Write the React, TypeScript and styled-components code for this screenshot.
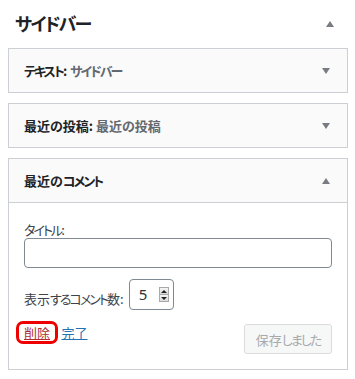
import React from "react";
import styled, { createGlobalStyle } from "styled-components";

const Global = createGlobalStyle`
  html, body { margin: 0; padding: 0; background: #ffffff; }
  body {
    font-family: "Noto Sans CJK JP", "Noto Sans", sans-serif;
    font-size: 13px;
    color: #1d2327;
    font-feature-settings: "palt";
  }
`;

const Kana = styled.span`
  letter-spacing: -0.15em;
`;

const Page = styled.div`
  width: 340px;
  margin-left: 8px;
  display: flex;
  flex-direction: column;
`;

const SidebarHead = styled.div`
  height: 48px;
  display: flex;
  align-items: center;
  justify-content: space-between;
  padding: 0 14px 0 7px;
  box-sizing: border-box;
`;

const SidebarTitle = styled.h2`
  margin: 0;
  font-size: 18px;
  font-weight: 700;
  line-height: 1;
  color: #1d2327;
  position: relative;
  top: -1px;
  letter-spacing: -0.1em;
`;

const Caret = styled.span<{ $up?: boolean }>`
  width: 0;
  height: 0;
  border-left: 4px solid transparent;
  border-right: 4px solid transparent;
  ${(p) =>
    p.$up
      ? "border-bottom: 6px solid #787c82;"
      : "border-top: 6px solid #787c82;"}
`;

const Widget = styled.div`
  border: 1px solid #ccd0d4;
  background: #ffffff;
  margin-bottom: 10px;
`;

const WidgetTop = styled.div<{ $open?: boolean }>`
  height: 43px;
  background: #fafafa;
  display: flex;
  align-items: center;
  justify-content: space-between;
  padding: 0 17px 0 15px;
  ${(p) => (p.$open ? "border-bottom: 1px solid #ccd0d4;" : "")}
`;

const WidgetTitle = styled.h3`
  margin: 0;
  font-size: 13px;
  font-weight: 700;
  line-height: 18px;
  color: #1d2327;
`;

const InTitle = styled.span`
  color: #646970;
`;

const WidgetBody = styled.div`
  padding: 19px 15px 15px;
  display: flex;
  flex-direction: column;
`;

const Label = styled.label`
  font-size: 13px;
  line-height: 16px;
  color: #3c434a;
`;

const TextInput = styled.div`
  height: 30px;
  box-sizing: border-box;
  border: 1px solid #7e8993;
  border-radius: 4px;
  background: #fff;
  margin-bottom: 11px;
`;

const NumberRow = styled.div`
  display: flex;
  align-items: center;
  gap: 5px;
  margin-bottom: 14px;
`;

const RowLabel = styled.span`
  font-size: 13px;
  line-height: 18px;
  color: #3c434a;
  margin-top: 9px;
`;

const NumberBox = styled.div`
  width: 45px;
  height: 31px;
  box-sizing: border-box;
  border: 1px solid #7e8993;
  border-radius: 4px;
  display: flex;
  align-items: center;
  padding: 0 4px 0 9px;
  justify-content: space-between;
`;

const NumberValue = styled.span`
  font-family: "Noto Sans", "Liberation Sans", sans-serif;
  font-size: 15px;
  color: #2c3338;
  line-height: 1;
`;

const Spinner = styled.div`
  display: flex;
  flex-direction: column;
  width: 10px;
  height: 15px;
  border: 1px solid #a9a9a9;
  box-sizing: border-box;
  background: #f0f0f0;
`;

const SpinBtn = styled.div<{ $down?: boolean }>`
  flex: 1;
  display: flex;
  align-items: center;
  justify-content: center;
  background: linear-gradient(#f6f6f6, #dcdcdc);
  ${(p) => (p.$down ? "border-top: 1px solid #a9a9a9;" : "")}
  &::before {
    content: "";
    width: 0;
    height: 0;
    border-left: 3px solid transparent;
    border-right: 3px solid transparent;
    ${(p) =>
      p.$down
        ? "border-top: 3px solid #222;"
        : "border-bottom: 3px solid #222;"}
  }
`;

const Actions = styled.div`
  display: flex;
  justify-content: space-between;
  align-items: flex-start;
`;

const Links = styled.div`
  display: flex;
  align-items: center;
  gap: 4px;
  font-size: 13px;
  line-height: 18px;
  color: #a7aaad;
`;

const DeleteLink = styled.a`
  position: relative;
  color: #b32d2e;
  text-decoration: underline;
  cursor: pointer;
  &::after {
    content: "";
    position: absolute;
    left: -8px;
    right: -8px;
    top: -3px;
    bottom: -2px;
    border: 3px solid #ee0000;
    border-radius: 7px;
  }
`;

const DoneLink = styled.a`
  color: #2271b1;
  text-decoration: underline;
  cursor: pointer;
`;

const SaveButton = styled.button`
  width: 88px;
  height: 30px;
  box-sizing: border-box;
  border: 1px solid #dcdcde;
  border-radius: 3px;
  background: #f6f7f7;
  color: #a7aaad;
  font-family: inherit;
  font-size: 13px;
  font-feature-settings: "palt";
  padding: 0;
`;

export default function App() {
  return (
    <>
      <Global />
      <Page>
        <SidebarHead>
          <SidebarTitle>サイドバー</SidebarTitle>
          <Caret $up />
        </SidebarHead>

        <Widget>
          <WidgetTop>
            <WidgetTitle>
              <Kana>テキスト</Kana>: <InTitle><Kana>サイドバー</Kana></InTitle>
            </WidgetTitle>
            <Caret />
          </WidgetTop>
        </Widget>

        <Widget>
          <WidgetTop>
            <WidgetTitle>
              最近の投稿: <InTitle>最近の投稿</InTitle>
            </WidgetTitle>
            <Caret />
          </WidgetTop>
        </Widget>

        <Widget>
          <WidgetTop $open>
            <WidgetTitle>
              最近の<Kana>コメント</Kana>
            </WidgetTitle>
            <Caret $up />
          </WidgetTop>
          <WidgetBody>
            <Label>
              <Kana>タイトル</Kana>:
            </Label>
            <TextInput />
            <NumberRow>
              <RowLabel>
                表示<Kana>するコメント</Kana>数:
              </RowLabel>
              <NumberBox>
                <NumberValue>5</NumberValue>
                <Spinner>
                  <SpinBtn />
                  <SpinBtn $down />
                </Spinner>
              </NumberBox>
            </NumberRow>
            <Actions>
              <Links>
                <DeleteLink>削除</DeleteLink>
                <span>|</span>
                <DoneLink>完了</DoneLink>
              </Links>
              <SaveButton disabled>
                保存<Kana>しました</Kana>
              </SaveButton>
            </Actions>
          </WidgetBody>
        </Widget>
      </Page>
    </>
  );
}
